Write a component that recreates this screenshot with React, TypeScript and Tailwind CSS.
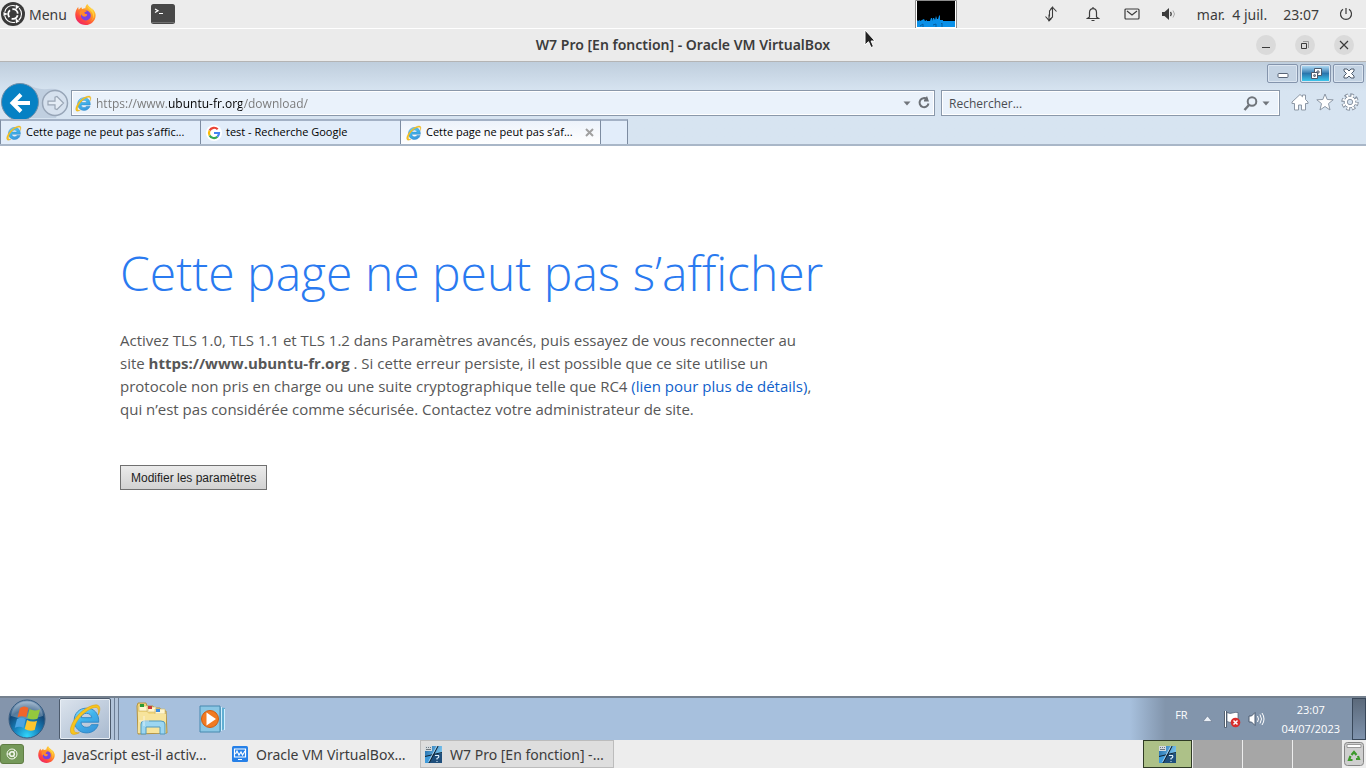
import React from "react";

const ui = "font-['Noto_Sans','Open_Sans',sans-serif]";
const guest = "font-['Open_Sans','Noto_Sans',sans-serif]";

function IeIcon({ size, id }: { size: number; id: string }) {
  return (
    <svg width={size} height={size} viewBox="0 0 32 32" aria-hidden="true" className="shrink-0">
      <defs>
        <linearGradient id={`ie-${id}`} x1="0" y1="0" x2="0.6" y2="1">
          <stop offset="0" stopColor="#8fe0fb" />
          <stop offset="0.5" stopColor="#3fb4ec" />
          <stop offset="1" stopColor="#3a98dc" />
        </linearGradient>
      </defs>
      <path
        d="M17 5C9.8 5 5 10.200 5 17s5 12 12 12c5.400 0 9.600-3 11.300-8h-6.600c-.9 1.700-2.500 2.600-4.700 2.600-3.100 0-5.200-1.900-5.400-5h17.200C29.200 10.500 24.700 5 17 5Zm-5.300 9.200c.5-2.700 2.500-4.200 5.200-4.200s4.700 1.500 5.100 4.200H11.700Z"
        fill={`url(#ie-${id})`}
        stroke="#2f86c4"
        strokeWidth="0.900"
      />
      <path
        d="M28.500 11.500C30.500 6.500 30.500 3 27.500 2 24.500 1 17 4 11 9.500 4.500 15.500.5 23.500 1.500 28c.7 3.200 4.500 3 8.500.8C7 29 4.600 28.400 4.800 25.500 5 21.500 9 15 14 10.500 19 6 25 3.200 27.300 4.700c1.300.9 1.500 3.500 1.200 6.800Z"
        fill="#f8c51c"
        stroke="#d69a10"
        strokeWidth="0.500"
      />
    </svg>
  );
}

function FirefoxIcon({ size, id }: { size: number; id: string }) {
  return (
    <svg width={size} height={size} viewBox="0 0 32 32" aria-hidden="true" className="shrink-0">
      <defs>
        <linearGradient id={`fx-${id}`} x1="0.9" y1="0" x2="0.2" y2="1">
          <stop offset="0" stopColor="#fff04a" />
          <stop offset="0.4" stopColor="#ff9a25" />
          <stop offset="0.75" stopColor="#ff4540" />
          <stop offset="1" stopColor="#e8206e" />
        </linearGradient>
      </defs>
      <path
        d="M30.500 13c-1-3-3-5-5-6.500 1 1.500 1.400 2.500 1.600 3.500C25 5 20.500 4.500 19 0c-2 1.500-3.200 4-3.200 6.500-1.700 0-3.600.6-4.800 1.500-.8-.8-1-2-1-3C8 6 6.700 7.600 6 8.700c-.8-.6-1-2.600-.9-4C3 6.500 0 11.500.5 18 1 26 7.500 32 16 32s15.500-6.500 15.500-15c0-1.500-.4-3-1-4Z"
        fill={`url(#fx-${id})`}
      />
      <circle cx="16.500" cy="17.500" r="7.500" fill="#7542e5" />
      <path d="M10 9c3-1.800 7 0 8 3-3-.5-4 1-3.500 2 1 1.500 3.500.5 4 2 .4 2-2.500 4-5 3.200-2-.6-3-2-3.500-4-.4 4-3 3-3-1.200 0-2 1-4 3-5Z" fill="#ff8a2c" />
      <path d="M19 2c-1 6 7.500 7 8.500 15 .5 4-1 8-4 10 7-5 7-14 2-19-2-2-5.500-3-6.500-6Z" fill="#ffd43c" />
    </svg>
  );
}

function UbuntuLogo() {
  return (
    <svg width="24" height="24" viewBox="0 0 24 24" aria-hidden="true">
      <circle cx="12" cy="12" r="12" fill="#3a3a3a" />
      <g fill="none" stroke="#fff">
        <circle cx="12" cy="12" r="8.500" strokeWidth="1.100" strokeDasharray="13.800 4" strokeDashoffset="-11" />
        <circle cx="12" cy="12" r="4.800" strokeWidth="1.800" strokeDasharray="7.500 2.550" strokeDashoffset="-1.300" />
      </g>
      <g fill="#fff">
        <path d="M2.500 10 7 12l-4.500 2z" />
        <path d="M2.500 10 7 12l-4.500 2z" transform="rotate(120 12 12)" />
        <path d="M2.500 10 7 12l-4.500 2z" transform="rotate(240 12 12)" />
      </g>
    </svg>
  );
}

function VmIcon({ size = 17 }: { size?: number }) {
  return (
    <svg width={size} height={size} viewBox="0 0 17 17" aria-hidden="true" className="shrink-0">
      <defs>
        <linearGradient id="vm-blue" x1="0" y1="0" x2="1" y2="0.4">
          <stop offset="0" stopColor="#1f6cab" />
          <stop offset="1" stopColor="#7cc6f0" />
        </linearGradient>
      </defs>
      <rect width="17" height="17" fill="url(#vm-blue)" />
      <path d="M0 10.500 7 9 3.500 17H0z" fill="#3f9bdb" />
      <path d="M8 9l9-2v10H4.500z" fill="#1f4f7c" />
      <path d="M0 0h7v5H0z" fill="#d4dade" />
      <path d="M1 1.500h1m1 0h1m1 0h1M1 3.500h5" stroke="#6d7880" />
      <path d="M13 0 4 17M0 10.500 17 6.500" stroke="#0f2233" strokeWidth="1.200" />
      <path d="M12 0 3.500 16" stroke="#d2edff" strokeWidth="0.700" />
      <path d="M10 9.500h3.500q1 2-1.500 3v1M11.500 15.500h1" fill="none" stroke="#dff1fd" strokeWidth="1.200" />
    </svg>
  );
}

function TopPanel() {
  return (
    <header className={`relative flex h-[29px] items-center border-b border-white bg-[#ececec] text-[14px] text-[#3c3c3c] ${ui}`}>
      <button className="flex items-center gap-1 pl-px">
        <UbuntuLogo />
        <span>Menu</span>
      </button>
      <button aria-label="Firefox" className="ml-2"><FirefoxIcon size={21} id="top" /></button>
      <button aria-label="Terminal" className="ml-[55px]">
        <svg width="24" height="20" viewBox="0 0 24 20">
          <rect width="24" height="20" rx="2.500" fill="#484848" />
          <path d="M1 18.500h22" stroke="#707070" />
          <path d="m4 5 3 1.700L4 8.500M8 9.500h4" fill="none" stroke="#fff" strokeWidth="1.200" />
        </svg>
      </button>
      <div className="ml-auto flex items-center">
        <svg width="42" height="28" viewBox="0 0 42 28" className="mr-[87px]" aria-label="Moniteur système">
          <rect width="42" height="28" fill="#fff" />
          <path d="M.5 28V.5h41V28" fill="none" stroke="#8c8c8c" />
          <rect x="2" y="1" width="38" height="26" fill="#000" />
          <path d="M2 27v-7l1 1 2-1v1l2-1 2-1 1 2 2-1v1h3l1-3h1v3l1-3h1l1 2 1-4 1 3h1l1-3 1-1v5h3v1h12v6z" fill="#0a90e8" />
          <path d="M5 26l3-2v3m10-2 3-1v3m5-3 1-1v4" stroke="#075fa0" fill="none" />
        </svg>
        <div className="flex items-center text-[#3c3c3c]">
          <button aria-label="Réseau" className="mr-[28px]">
            <svg width="14" height="16" viewBox="0 0 14 16" fill="none" stroke="currentColor" strokeWidth="1.100">
              <path d="M5.500 10.500V5L8.500 1.500V11L5 14.500V8.500" />
              <path d="M6.500 3.300 8.500 1.200 12.500 5.500M1.500 10.500 5.200 14.600 7.300 12.500" />
            </svg>
          </button>
          <button aria-label="Notifications" className="mr-[24px]">
            <svg width="14" height="16" viewBox="0 0 14 16" fill="none" stroke="currentColor" strokeWidth="1.200">
              <path d="M7 1v1.500M3.500 11V6.500C3.500 1.200 10.500 1.200 10.500 6.500V11l2 1.500h-11zM5.500 14.500h3" />
            </svg>
          </button>
          <button aria-label="Courrier" className="mr-[22px]">
            <svg width="16" height="12" viewBox="0 0 16 12" fill="none" stroke="currentColor" strokeWidth="1.200">
              <rect x="1" y="1" width="14" height="10" rx="1" /><path d="m3 3 5 4 5-4" />
            </svg>
          </button>
          <button aria-label="Volume" className="mr-[21px]">
            <svg width="14" height="14" viewBox="0 0 14 14" fill="none" stroke="currentColor">
              <path d="M0 5h2.500L7 1v12L2.500 9H0z" fill="currentColor" stroke="none" />
              <path d="M8.500 5q1.500 2 0 4" strokeWidth="1.300" /><path d="M11 3.500q3 3.500 0 7" stroke="#aaa" />
            </svg>
          </button>
          <button className="mr-[20px] flex gap-4 whitespace-pre"><span>mar.  4 juil.</span><span>23:07</span></button>
          <button aria-label="Éteindre" className="mr-[13px]">
            <svg width="14" height="14" viewBox="0 0 14 14" fill="none" stroke="currentColor" strokeWidth="1.200">
              <path d="M7 1v6M4 2.300a5.500 5.500 0 1 0 6 0" />
            </svg>
          </button>
        </div>
      </div>
    </header>
  );
}

function TitleBar() {
  const round = "flex h-5 w-5 items-center justify-center rounded-full bg-[#dadada] text-[#3a3a3a]";
  return (
    <div className={`grid h-[33px] grid-cols-[1fr_auto_1fr] items-center border-b border-[#b4b4b4] bg-[#ebebeb] ${ui}`}>
      <span />
      <h2 className="pb-[2px] text-[14px] font-semibold text-[#3c3c3c]">W7 Pro [En fonction] - Oracle VM VirtualBox</h2>
      <div className="flex justify-end gap-[19px] pr-3">
        <button aria-label="Réduire" className={round}>
          <svg width="10" height="10" viewBox="0 0 10 10"><path d="M1 7.500h8" stroke="currentColor" /></svg>
        </button>
        <button aria-label="Restaurer" className={round}>
          <svg width="10" height="10" viewBox="0 0 10 10" fill="none"><path d="M1.500 3.500h5v5h-5z" stroke="currentColor" /><path d="M3 1.500h5.500V8" stroke="#999" /></svg>
        </button>
        <button aria-label="Fermer" className={round}>
          <svg width="10" height="10" viewBox="0 0 10 10"><path d="m1 1 8 8M9 1 1 9" stroke="currentColor" strokeWidth="1.200" /></svg>
        </button>
      </div>
    </div>
  );
}

function Caption() {
  const b = "flex h-[19px] w-[31px] items-center justify-center rounded-[2px] border border-[#8494ac] shadow-[inset_0_0_0_1px_#dbe5f0]";
  return (
    <div className="flex h-7 justify-end gap-[2px] pt-[2px] pr-[2px]">
      <button aria-label="Réduire la fenêtre" className={`${b} bg-[#c4d3e3]`}>
        <svg width="12" height="12" viewBox="0 0 12 12"><rect x="1" y="5.500" width="10" height="4" rx="1" fill="#fff" stroke="#596577" /></svg>
      </button>
      <button aria-label="Niveau inférieur" className={`${b} bg-linear-to-b from-[#a5d2ee] from-10% via-[#2a76ad] via-50% to-[#3fd0f3]`}>
        <svg width="14" height="14" viewBox="0 0 14 14" fill="#fff" stroke="#4c5a6c"><path d="M5.500 1.500h7v7h-7z" /><path d="M8 4h2v2H8z" /><path d="M2.500 5.500h6v6h-6z" /><path d="M4.800 7.800h1.500v1.500H4.800z" /></svg>
      </button>
      <button aria-label="Fermer la fenêtre" className={`${b} bg-[#c4d3e3]`}>
        <svg width="12" height="11" viewBox="0 0 12 11"><path d="M1 1h3l2 2 2-2h3v2L8.500 5.500 11 8v2H8L6 8l-2 2H1V8l2.500-2.500L1 3z" fill="#fff" stroke="#4c5a6c" /></svg>
      </button>
    </div>
  );
}

function Caret() {
  return <svg width="8" height="5" viewBox="0 0 8 5" aria-hidden="true"><path d="M.5.500h7L4 4.500z" fill="#70757b" /></svg>;
}

function AddressRow() {
  return (
    <div className="flex h-[29px] items-start">
      <div className="-mt-[8px] w-[71px] shrink-0">
        <svg width="71" height="37" viewBox="0 0 71 37" role="img" aria-label="Précédent et suivant">
          <path d="M28 2q7 6 20 5 12-1 16 5l-8 24H30z" fill="#b7c6d9" opacity="0.700" />
          <circle cx="20" cy="20" r="18.500" fill="#0681c4" stroke="#7190aa" strokeWidth="1" />
          <path d="M30 21H13M21 12.500 12.500 21l8.500 8.500" fill="none" stroke="#fff" strokeWidth="4" />
          <circle cx="55" cy="21" r="12.500" fill="#d6e1ee" stroke="#97a5b7" strokeWidth="1.500" />
          <path d="M48 19.200h7v-4l2-.7 6.500 6.500-6.500 6.500-2-.7v-4h-7z" fill="#e4ecf5" stroke="#9aa6b5" strokeWidth="1.200" />
        </svg>
      </div>
      <div className="flex h-[26px] min-w-0 flex-1 items-center border border-[#8a98aa] bg-[#eaf2fb] px-[3px] shadow-[inset_0_0_0_1px_#fff]">
        <IeIcon size={17} id="addr" />
        <input
          aria-label="Adresse"
          defaultValue="https://www.ubuntu-fr.org/download/"
          className={`ml-1 h-full min-w-0 flex-1 bg-[linear-gradient(to_right,#777_0_71px,#000_71px_146px,#777_146px)] bg-clip-text text-[12px] text-transparent outline-none ${guest}`}
        />
        <button aria-label="Historique" className="mr-[6px]"><Caret /></button>
        <button aria-label="Actualiser">
          <svg width="14" height="14" viewBox="0 0 14 14"><path d="M10 3.200A4.500 4.500 0 1 0 11.500 7.500" fill="none" stroke="#6c7177" strokeWidth="2" /><path d="M7 5.500V4l3-4 2 5.500z" fill="#6c7177" /></svg>
        </button>
      </div>
      <div className="ml-[6px] flex h-[26px] w-[339px] items-center border border-[#8a98aa] bg-[#eaf2fb] pr-[9px] pl-[7px] shadow-[inset_0_0_0_1px_#fff]">
        <input aria-label="Rechercher" placeholder="Rechercher..." className={`h-full min-w-0 flex-1 text-[12px] outline-none placeholder:text-[#4a4d52] ${guest}`} />
        <button aria-label="Lancer la recherche" className="mr-[4px]">
          <svg width="15" height="15" viewBox="0 0 15 15"><circle cx="9" cy="5.500" r="4.300" fill="none" stroke="#70757b" strokeWidth="2" /><path d="M6 9 1.500 14" stroke="#70757b" strokeWidth="2.500" /></svg>
        </button>
        <button aria-label="Moteurs de recherche"><Caret /></button>
      </div>
      <div className="flex w-[86px] items-center justify-end gap-[7px] pt-[3px] pr-[7px]">
        <button aria-label="Accueil"><svg width="18" height="18" viewBox="0 0 18 18"><path d="M1 9 9 1.500l2.500 2.300V2h3v4.500L17 9v1.500h-2.500V17h-4v-5h-3v5h-4v-6.500H1z" fill="#fff" stroke="#8c97a5" /></svg></button>
        <button aria-label="Favoris"><svg width="18" height="18" viewBox="0 0 18 18"><path d="m9 1 2.200 5.500 6 .3-4.700 3.800L14 17l-5-3.500L4 17l1.500-6.400L.8 6.800l6-.3z" fill="#fff" stroke="#8c97a5" /></svg></button>
        <button aria-label="Outils"><svg width="18" height="18" viewBox="0 0 18 18"><circle cx="9" cy="9" r="7" fill="none" stroke="#8c97a5" strokeWidth="3.500" strokeDasharray="3.500 1.998" /><circle cx="9" cy="9" r="5.800" fill="#fff" stroke="#8c97a5" /><circle cx="9" cy="9" r="6.500" fill="none" stroke="#fff" strokeWidth="2.500" strokeDasharray="1.800 3.305" strokeDashoffset="-0.700" /><circle cx="9" cy="9" r="2.700" fill="#d5e2f0" stroke="#8c97a5" /></svg></button>
      </div>
    </div>
  );
}

function Tabs() {
  const tab = "flex h-full items-center gap-1 border-t-2 border-r border-t-[#a3b1c5] border-r-[#7d8ca1] pl-[5px] text-[11px] whitespace-nowrap text-black";
  return (
    <div className={`flex h-[27px] items-stretch border-b-2 border-[#a9b7c8] ${guest}`} role="tablist">
      <button role="tab" className={`${tab} w-[201px] border-l border-l-[#7d8ca1] bg-[#e2edfa]`} aria-selected="false">
        <IeIcon size={16} id="t1" /><span>Cette page ne peut pas s’affic...</span>
      </button>
      <button role="tab" className={`${tab} w-[200px] bg-[#e2edfa]`} aria-selected="false">
        <svg width="16" height="16" viewBox="0 0 16 16" className="shrink-0">
          <circle cx="8" cy="8" r="8" fill="#fff" />
          <g fill="none" strokeWidth="2.200">
            <path d="M11.700 4.300A5 5 0 0 0 3.600 5.600" stroke="#ea4335" />
            <path d="M3.600 5.600a5 5 0 0 0 0 4.800" stroke="#fbbc05" />
            <path d="M3.600 10.400a5 5 0 0 0 7.800 1.300" stroke="#34a853" />
            <path d="M11.400 11.700A5 5 0 0 0 13 8H8" stroke="#4285f4" />
          </g>
        </svg>
        <span>test - Recherche Google</span>
      </button>
      <div className={`${tab} w-[200px] bg-linear-to-b from-[#edf3fb] to-white`}>
        <IeIcon size={16} id="t3" /><button role="tab" aria-selected="true">Cette page ne peut pas s’af...</button>
        <button aria-label="Fermer l’onglet" className="mr-[6px] ml-auto"><svg width="9" height="9" viewBox="0 0 9 9"><path d="m1 1 7 7M8 1 1 8" stroke="#a0a0a0" strokeWidth="2" /></svg></button>
      </div>
      <button aria-label="Nouvel onglet" className="h-full w-[27px] border-t-2 border-r border-t-[#a3b1c5] border-r-[#7d8ca1] bg-[#e2edfa]" />
    </div>
  );
}

function ErrorPage() {
  return (
    <main className={`flex-1 bg-white pt-[91px] pl-[120px] whitespace-nowrap ${guest}`}>
      <h1 className="text-[48px] leading-[72px] font-light text-[#2a7af0]">Cette page ne peut pas s’afficher</h1>
      <p className="mt-5 text-[15px] leading-[23px] text-[#575757]">
        Activez TLS 1.0, TLS 1.1 et TLS 1.2 dans Paramètres avancés, puis essayez de vous reconnecter au<br />
        site <strong>https://www.ubuntu-fr.org</strong> . Si cette erreur persiste, il est possible que ce site utilise un<br />
        protocole non pris en charge ou une suite cryptographique telle que RC4 <a href="#details" className="text-[#0f5fcb]">(lien pour plus de détails)</a>,<br />
        qui n’est pas considérée comme sécurisée. Contactez votre administrateur de site.
      </p>
      <button className="mt-11 h-[25px] border border-[#707070] bg-linear-to-b from-[#ebebeb] to-[#d2d2d2] px-[10px] font-['Liberation_Sans',sans-serif] text-[12px] text-[#1e1e1e]">Modifier les paramètres</button>
    </main>
  );
}

function StartOrb() {
  return (
    <svg width="38" height="40" viewBox="0 0 38 40" aria-hidden="true">
      <defs>
        <radialGradient id="orb" cx="0.5" cy="0.95" r="0.9">
          <stop offset="0" stopColor="#31d6fb" /><stop offset="0.4" stopColor="#1682bd" /><stop offset="0.75" stopColor="#134675" /><stop offset="1" stopColor="#7d9bb9" />
        </radialGradient>
      </defs>
      <ellipse cx="19" cy="20" rx="18" ry="19" fill="url(#orb)" stroke="#385d82" />
      <path d="M3 17C4 7 12 2.500 19 2.500S34 7 35 17q-16 6-32 0Z" fill="#fff" opacity="0.280" />
      <path d="M12 9q4-3 8.500 0l-2.300 9.500q-4-2.600-8.700-.2Z" fill="#f0652a" />
      <path d="M21.500 10q4.500 2.500 10.500.5l-2.500 9.200q-5 2-10.200-.8Z" fill="#94c83d" />
      <path d="M9 20q4.500-2.600 8.800.2L15.500 29q-4-2.600-8.700-.2Z" fill="#4ba3e2" />
      <path d="M19 21q5 2.700 10 .7L26.700 31q-5 1.800-10-1Z" fill="#fdc62f" />
    </svg>
  );
}

function GuestTaskbar() {
  return (
    <div className={`flex h-[44px] border-t-2 border-[#75818f] bg-[#a7c0dd] ${guest}`}>
      <button aria-label="Démarrer" className="flex w-[59px] items-center bg-[#8495ac] pl-2"><StartOrb /></button>
      <button aria-label="Internet Explorer" className="flex w-[52px] items-center justify-center rounded-[2px] border border-[#4d5b6d] bg-linear-to-br from-[#dce4ed] to-[#a8b9cf] shadow-[inset_0_0_0_1px_#e8eef5]"><IeIcon size={33} id="task" /></button>
      <span className="w-1 border-r border-[#6c7e96] bg-[#b2c4da]" />
      <span className="w-1 border-r border-[#6c7e96] bg-[#b2c4da]" />
      <button aria-label="Explorateur Windows" className="ml-4">
        <svg width="34" height="36" viewBox="0 0 34 36">
          <path d="M2 5 3 2h8l1 3h6l1 2h6l1 3h5l1 22-29 1z" fill="#f2d77d" stroke="#b59442" />
          <path d="M4 5h9v5H4zM12 6h9v5h-9zM20 8h10v5H20z" fill="#fff6cf" stroke="#cfb566" strokeWidth="0.600" />
          <path d="M5 3h4v3H5z" fill="#2b9a34" /><path d="M13 5h4v3h-4z" fill="#c93b3a" /><path d="M21 8h4v3h-4z" fill="#3a8be0" />
          <path d="M3 11h9l2 2h17v19H3z" fill="#f7e49c" />
          <path d="M6 33V23q0-3 3-3h17q4 0 4 3v10h-5v-7H11v7z" fill="#9cd6f1" stroke="#5299bd" />
          <path d="M9 15v10M4 20h10" stroke="#fff" strokeWidth="0.800" opacity="0.800" />
        </svg>
      </button>
      <button aria-label="Lecteur Windows Media" className="ml-7">
        <svg width="32" height="32" viewBox="0 0 32 32">
          <path d="m20 4 8 1v21l-8 3z" fill="#62afd3" /><path d="M24.500 4v24M27.500 6v21" stroke="#d0efff" />
          <path d="M3 3h20v26H3z" fill="#8ac7e4" stroke="#4689af" />
          <circle cx="13" cy="16" r="8.500" fill="#f17a21" stroke="#d05d10" /><path d="M9.500 9.500 19 16l-9.500 6.500z" fill="#fff" />
        </svg>
      </button>
      <div className="ml-auto flex w-[236px] items-center justify-end bg-linear-to-r from-[#a7c0dd] to-[#8295ac] to-15% text-[11px] text-white">
        <button className="mr-[15px] pb-2">FR</button>
        <button aria-label="Icônes cachées" className="mr-[12px]"><svg width="9" height="6" viewBox="0 0 9 6"><path d="M4.500 0 9 5.500H0z" fill="#e9eff6" stroke="#5b6b80" strokeWidth="0.500" /></svg></button>
        <button aria-label="Centre de maintenance" className="mr-[7px]"><svg width="17" height="18" viewBox="0 0 17 18"><path d="M1.500 1v16.500" stroke="#333f4f" strokeWidth="2.600" /><path d="M1.500 1v16" stroke="#fff" strokeWidth="1.200" /><path d="M3 2.500q3 1.500 5.500.5T14 2.500V11q-3 0-5.500 1T3 11.500z" stroke="#4a596d" strokeWidth="0.700" fill="#fff" /><circle cx="11.500" cy="12.500" r="4.800" fill="#d72e2d" /><path d="m9.500 10.500 4 4m0-4-4 4" stroke="#fff" strokeWidth="1.500" /></svg></button>
        <button aria-label="Haut-parleurs" className="mr-[17px]"><svg width="17" height="16" viewBox="0 0 17 16" fill="none" stroke="#fff"><path d="M1 5h2.500L7 1.500v13L3.500 11H1z" fill="#fff" stroke="#4d5d72" /><path d="M9.500 5q2 3 0 6M12 3.500q3 4.500 0 9M14 2q4 6 0 12" /></svg></button>
        <button className="mr-3 text-center leading-[19px]">23:07<br />04/07/2023</button>
        <button aria-label="Afficher le bureau" className="h-full w-[14px] border border-[#39485a] bg-linear-to-b from-[#5c6a7b] to-[#7f93ad]" />
      </div>
    </div>
  );
}

function BottomPanel() {
  return (
    <footer className={`flex h-7 items-center bg-[#ededed] text-[14px] whitespace-nowrap text-[#3c3c3c] ${ui}`}>
      <button aria-label="Afficher le bureau Ubuntu" className="flex h-5 w-6 items-center justify-center rounded-[3px] border border-[#607d44] bg-[#75995a]">
        <svg width="12" height="12" viewBox="0 0 12 12" fill="none" stroke="#f4f8ef"><circle cx="6" cy="6" r="5" /><circle cx="6" cy="6" r="2.300" strokeWidth="1.500" /><path d="M1 6h2M7.500 4 9 2M7.500 8 9 10" /></svg>
      </button>
      <button className="ml-[14px] flex w-[194px] items-center gap-2"><FirefoxIcon size={17} id="bottom" /><span>JavaScript est-il activ…</span></button>
      <button className="flex w-[188px] items-center gap-2">
        <svg width="16" height="16" viewBox="0 0 16 16" className="shrink-0"><rect width="16" height="16" rx="1.500" fill="#2580e8" /><path d="M2.500 3h11v8h-11zM6 13.500h4" fill="none" stroke="#fff" strokeWidth="1.200" /><path d="m3.500 8 1.500-3 2 4 2-3 1.500 3L13 5" fill="none" stroke="#fff" strokeWidth="1.200" /></svg>
        <span>Oracle VM VirtualBox…</span>
      </button>
      <button className="flex h-full w-[194px] items-center gap-2 border border-[#bcbcbc] bg-[#dedede] pl-1"><VmIcon /><span>W7 Pro [En fonction] -…</span></button>
      <div className="ml-auto flex h-full items-stretch gap-px">
        <button aria-label="Espace de travail 1" className="flex w-[49px] items-center justify-center border border-[#2f3b25] bg-[#adc188]"><VmIcon /></button>
        <button aria-label="Espace de travail 2" className="w-[49px] bg-[#a6a6a6]" />
        <button aria-label="Espace de travail 3" className="w-[49px] bg-[#a6a6a6]" />
        <button aria-label="Espace de travail 4" className="w-[49px] bg-[#a6a6a6]" />
      </div>
      <button aria-label="Corbeille" className="mr-[2px] ml-[2px]">
        <svg width="20" height="24" viewBox="0 0 20 24"><rect x="0.500" y="0.500" width="19" height="23" rx="3" fill="#cfcfcf" stroke="#858585" /><path d="M3 2.500h14v3H3z" fill="#fff" stroke="#999" /><g fill="none" stroke="#3e9a2d" strokeWidth="2.200"><path d="m7.500 13 2.500-3 2.500 3M14 14l1 3h-3M8.500 18H5l1.500-4" /></g></svg>
      </button>
    </footer>
  );
}

export default function App() {
  return (
    <div className="relative flex min-h-screen flex-col overflow-hidden bg-white">
      <TopPanel />
      <TitleBar />
      <section className="bg-linear-to-b from-[#bfcedd] to-[#d7e4f1] to-35%">
        <Caption />
        <AddressRow />
        <Tabs />
      </section>
      <ErrorPage />
      <GuestTaskbar />
      <BottomPanel />
      <svg className="pointer-events-none absolute top-[29px] left-[864px]" width="12" height="20" viewBox="0 0 12 20" aria-hidden="true">
        <path d="M1 1v15l3.500-3.300L7 18.500l2.500-1-2.400-5.500H11z" fill="#222" stroke="#fff" />
      </svg>
    </div>
  );
}
